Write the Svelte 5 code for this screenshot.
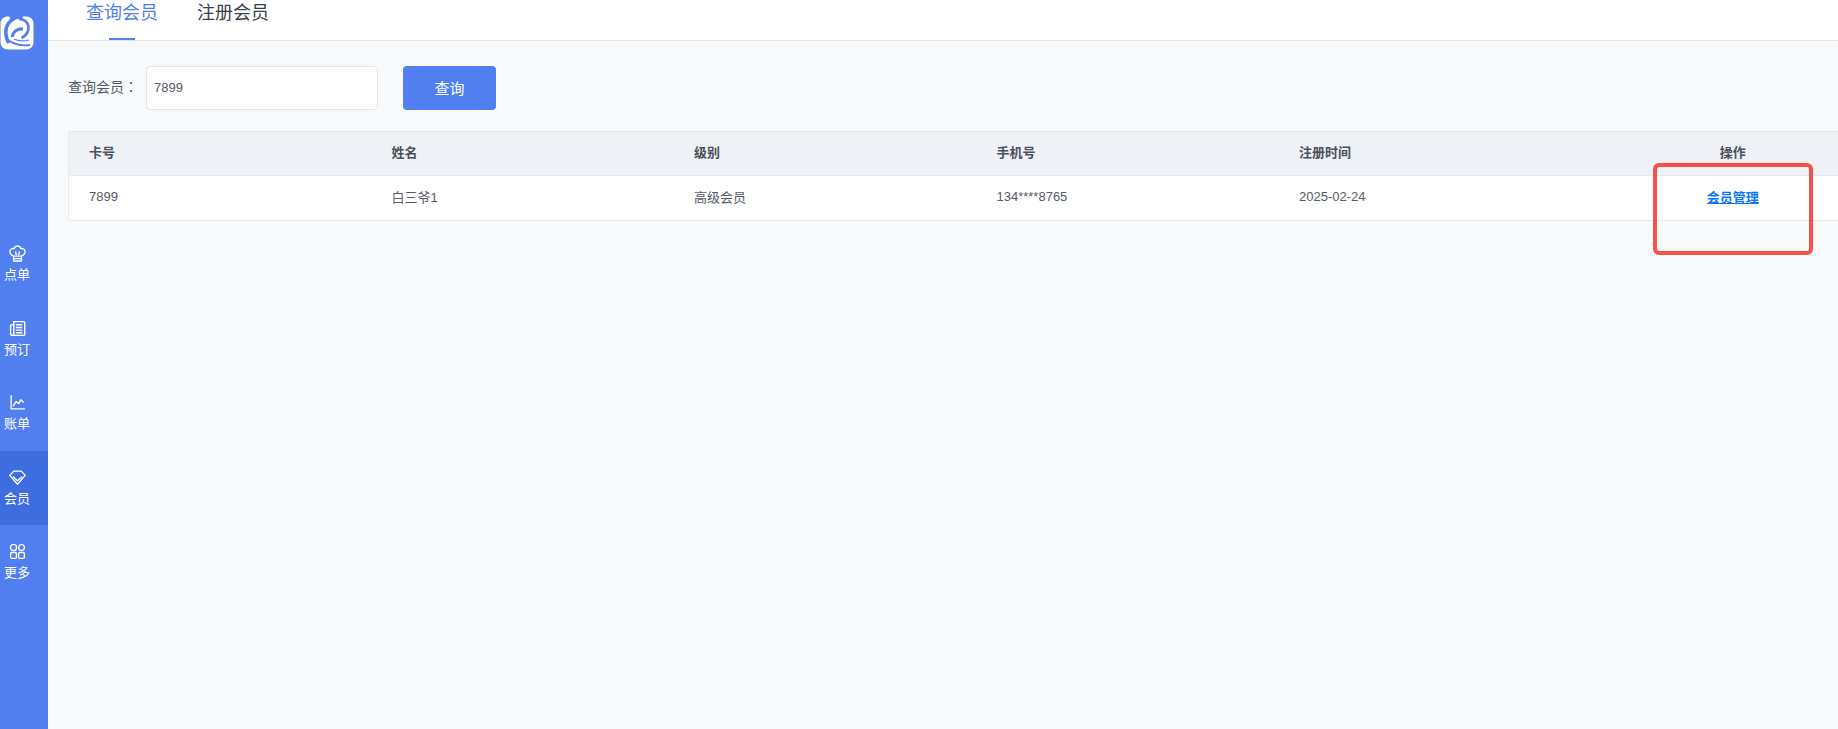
<script lang="ts">
	const navItems = [
		{ key: 'order', label: '点单' },
		{ key: 'booking', label: '预订' },
		{ key: 'bill', label: '账单' },
		{ key: 'member', label: '会员' },
		{ key: 'more', label: '更多' }
	];
	let activeNav = $state('member');
	let activeTab = $state('query');
	let keyword = $state('7899');

	const tabs = [
		{ key: 'query', label: '查询会员' },
		{ key: 'register', label: '注册会员' }
	];

	const columns = ['卡号', '姓名', '级别', '手机号', '注册时间'];
	const rows = [
		{ card: '7899', name: '白三爷1', level: '高级会员', phone: '134****8765', date: '2025-02-24' }
	];
</script>

<div class="page">
	<aside class="sidebar">
		<div class="logo">
			<svg viewBox="0 0 34 34" width="34" height="34" fill="none">
				<rect x="0.500" y="0.500" width="33" height="33" rx="7" fill="#fff" />
				<path d="M9 -1h12v1.500C14 1 7 6 6 14c-.500 5 0 9 3 13" fill="none" stroke="#527fef" stroke-width="3.500" />
				<path d="M10 -2h10v3L10 4z" fill="#527fef" />
				<path d="M19 3c5 0 9 3 9.500 7.500.400 5-2.500 9-7 11.500" stroke="#527fef" stroke-width="2.600" />
				<path d="M12 21c1-5 5-8.500 11-8" stroke="#527fef" stroke-width="3.200" />
				<path d="M8 24c5 4 13 6 22 5" stroke="#527fef" stroke-width="1.800" />
				<path d="M14 23c4 2 9 2.500 15 1" stroke="#527fef" stroke-width="1.200" />
			</svg>
		</div>
		<nav class="nav">
			{#each navItems as item}
				<button class="nav-item" class:active={activeNav === item.key} onclick={() => (activeNav = item.key)}>
					<svg class="nav-icon" viewBox="0 0 16 16" width="17" height="17" fill="none" stroke="#fff" stroke-width="1.300" stroke-linejoin="round" stroke-linecap="round">
						{#if item.key === 'order'}
							<path d="M4.300 10.500C2.300 9.700.700 8.300.800 6 1 3.900 3 3 4.700 3.500 5.400 1.800 6.800 1 8 1s2.600.8 3.300 2.500C13 3 15 3.900 15.200 6c.1 2.300-1.500 3.700-3.500 4.500z" />
							<path d="M4.300 10.500V15h7.400v-4.500M4.300 12.800h7.400M6.300 6.500l.5 2.500M9.700 6.500 9.200 9" />
						{:else if item.key === 'booking'}
							<path d="M4.500 1.500H14a.8.8 0 0 1 .8.8v11.400a.8.800 0 0 1-.8.800H3a1.500 1.500 0 0 1-1.500-1.500V5.500a1 1 0 0 1 1-1h2" />
							<path d="M4.500 1.500v11.500a1.200 1.200 0 0 1-1.200 1.500M7 4.500h5M7 7h5M7 9.500h5M7 12h5" />
						{:else if item.key === 'bill'}
							<path d="M2 1.500v12.500h12.500" />
							<path d="M4.200 11l2.600-4 2.300 2 2-3.500 2.400 2.200" />
						{:else if item.key === 'member'}
							<path d="M4.500 2h7L15.300 6 8 14.300.700 6z" />
							<path d="M4 7.500 8 11l4-3.500" />
						{:else}
							<rect x="1.500" y="1.500" width="5.500" height="5.500" rx="2" />
							<rect x="9" y="1.500" width="5.500" height="5.500" rx="2.700" />
							<rect x="1.500" y="9" width="5.500" height="5.500" rx="1" />
							<rect x="9" y="9" width="5.500" height="5.500" rx="1" />
						{/if}
					</svg>
					<span>{item.label}</span>
				</button>
			{/each}
		</nav>
	</aside>

	<main class="main">
		<header class="tabs">
			{#each tabs as tab}
				<button class="tab" class:active={activeTab === tab.key} onclick={() => (activeTab = tab.key)}>{tab.label}</button>
			{/each}
		</header>

		<section class="content">
			<div class="search">
				<label for="member-query">查询会员：</label>
				<input id="member-query" bind:value={keyword} />
				<button class="search-btn">查询</button>
			</div>

			<table class="table">
				<thead>
					<tr>
						{#each columns as col}
							<th>{col}</th>
						{/each}
						<th class="op">操作</th>
					</tr>
				</thead>
				<tbody>
					{#each rows as row}
						<tr>
							<td>{row.card}</td>
							<td>{row.name}</td>
							<td>{row.level}</td>
							<td>{row.phone}</td>
							<td>{row.date}</td>
							<td class="op"><a href="#member">会员管理</a></td>
						</tr>
					{/each}
				</tbody>
			</table>
		</section>
	</main>

	<div class="mark"></div>
</div>

<style>
	:global(body) {
		margin: 0;
		overflow: hidden;
	}

	.page {
		position: relative;
		display: flex;
		height: 729px;
		overflow: hidden;
		background: #f8f9fb;
		font-family: 'Liberation Sans', 'Noto Sans CJK SC', sans-serif;
		color: #555a66;
	}

	.sidebar {
		flex: none;
		width: 48px;
		background: #527fef;
	}

	.logo {
		display: flex;
		width: 34px;
		height: 34px;
		padding-top: 16px;
	}

	.nav {
		display: flex;
		flex-direction: column;
		margin-top: 177px;
	}

	.nav-item {
		display: flex;
		flex-direction: column;
		align-items: center;
		gap: 5px;
		height: 74.600px;
		padding: 18px 14px 0 0;
		box-sizing: border-box;
		border: none;
		background: none;
		color: #fff;
		font: inherit;
		font-size: 13px;
		line-height: 15px;
		cursor: pointer;
	}

	.nav-item.active {
		background: #3e6de0;
	}

	.nav-icon {
		display: block;
	}

	.main {
		flex: none;
		width: 1790px;
		min-width: 0;
	}

	.tabs {
		display: flex;
		gap: 39px;
		height: 40px;
		padding-left: 38px;
		background: #fff;
		border-bottom: 1px solid #e4e8f5;
	}

	.tab {
		position: relative;
		height: 40px;
		padding: 2px 0 16px;
		border: none;
		background: none;
		color: #3a3f4d;
		font: inherit;
		font-size: 18px;
		line-height: 22px;
		cursor: pointer;
	}

	.tab.active {
		color: #527fef;
	}

	.tab.active::after {
		content: '';
		position: absolute;
		left: 23px;
		bottom: 0;
		width: 26px;
		height: 2px;
		background: #527fef;
	}

	.content {
		padding: 25px 0 0 20px;
	}

	.search {
		display: flex;
		align-items: center;
		height: 44px;
	}

	.search label {
		width: 78px;
		padding-bottom: 4px;
		font-family: 'Liberation Sans', 'Noto Sans CJK TC', sans-serif;
		font-size: 14px;
		color: #555a66;
	}

	.search input {
		width: 232px;
		height: 44px;
		padding: 0 7px 2px;
		box-sizing: border-box;
		border: 1px solid #e2e5f0;
		border-radius: 4px;
		outline: none;
		background: #fff;
		color: #555a66;
		font: inherit;
		font-size: 13px;
	}

	.search-btn {
		width: 93px;
		height: 44px;
		margin-left: 25px;
		padding: 0 0 2px;
		border: none;
		border-radius: 4px;
		background: #527fef;
		color: #fff;
		font: inherit;
		font-size: 15px;
		cursor: pointer;
	}

	.table {
		width: 1817px;
		margin-top: 21px;
		table-layout: fixed;
		border-collapse: separate;
		border-spacing: 0;
		border: 1px solid #e4e8f5;
		border-radius: 2px;
		background: #fff;
		font-size: 13px;
	}

	.table th,
	.table td {
		width: 302.200px;
		padding: 0 0 4px 20px;
		box-sizing: border-box;
		text-align: left;
	}

	.table td {
		height: 44px;
		padding-bottom: 3px;
	}

	.table th {
		height: 44px;
		background: #eef1f6;
		border-bottom: 1px solid #e4e8f5;
		color: #4a4f5c;
		font-weight: 700;
	}

	.table th.op,
	.table td.op {
		padding: 0 0 4px;
		text-align: center;
	}

	.table a {
		color: #0a78f5;
		font-weight: 700;
		text-decoration: underline;
	}

	.mark {
		position: absolute;
		left: 1653px;
		top: 163px;
		width: 160px;
		height: 92px;
		box-sizing: border-box;
		border: 4px solid #f5504a;
		border-radius: 6px;
	}
</style>
